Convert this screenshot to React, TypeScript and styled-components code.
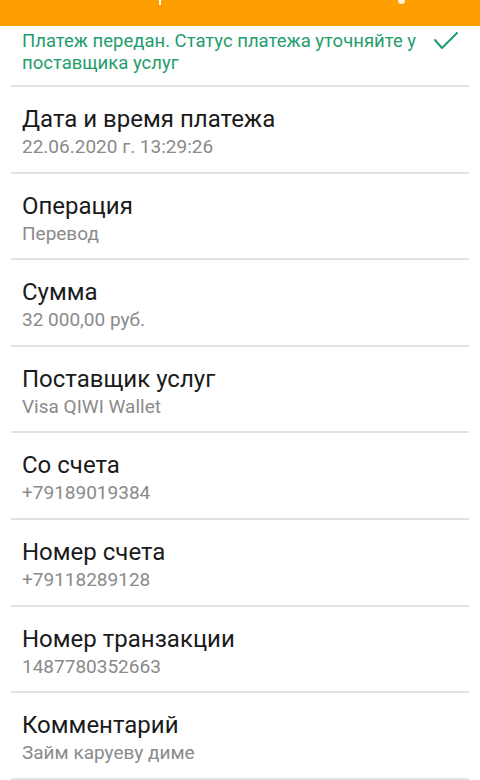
import React from "react";
import styled, { createGlobalStyle } from "styled-components";

const Global = createGlobalStyle`
  html, body { margin: 0; padding: 0; background: #ffffff; }
  body { font-family: Roboto, "Noto Sans", "Liberation Sans", sans-serif; }
  * { box-sizing: border-box; }
`;

const Page = styled.div`
  width: 480px;
  height: 780px;
  overflow: hidden;
  background: #ffffff;
  display: flex;
  flex-direction: column;
`;

const Header = styled.div`
  position: relative;
  height: 26px;
  flex: none;
  background: #ff9e00;
  overflow: hidden;
`;

const GlyphTail = styled.span<{ $left: number }>`
  position: absolute;
  top: 0;
  left: ${(p) => p.$left}px;
  width: 2px;
  height: 5px;
  background: #ffffff;
`;

const GlyphDot = styled.span<{ $left: number }>`
  position: absolute;
  top: -3px;
  left: ${(p) => p.$left}px;
  width: 7px;
  height: 7px;
  border-radius: 50%;
  background: #fff3d6;
`;

const Status = styled.div`
  margin: 0 11px;
  padding: 4px 11px 11px;
  border-bottom: 2px solid #e2e2e2;
  display: flex;
  align-items: flex-start;
  gap: 12px;
`;

const StatusText = styled.div`
  flex: 1;
  font-size: 18.5px;
  line-height: 22px;
  color: #1f9d6c;
`;

const CheckIcon = styled.svg`
  flex: none;
  width: 24px;
  height: 18px;
  margin-top: 2px;
  margin-right: 0;
`;

const Row = styled.div`
  margin: 0 11px;
  padding: 18px 11px 0;
  height: 86.6px;
  border-bottom: 2px solid #e2e2e2;
  display: flex;
  flex-direction: column;
  gap: 3px;
`;

const Title = styled.div`
  font-size: 24px;
  line-height: 28px;
  color: #1b1b1b;
`;

const Value = styled.div`
  font-size: 19px;
  line-height: 22px;
  color: #8a8a8a;
`;

const items: [string, string][] = [
  ["Дата и время платежа", "22.06.2020 г. 13:29:26"],
  ["Операция", "Перевод"],
  ["Сумма", "32 000,00 руб."],
  ["Поставщик услуг", "Visa QIWI Wallet"],
  ["Со счета", "+79189019384"],
  ["Номер счета", "+79118289128"],
  ["Номер транзакции", "1487780352663"],
  ["Комментарий", "Займ каруеву диме"],
];

export default function App() {
  return (
    <>
      <Global />
      <Page>
        <Header>
          <GlyphTail $left={159} />
          <GlyphDot $left={398} />
        </Header>
        <Status>
          <StatusText>
            Платеж передан. Статус платежа уточняйте у поставщика услуг
          </StatusText>
          <CheckIcon viewBox="0 0 24 18">
            <path
              d="M1 8 L8 16 L23 1"
              fill="none"
              stroke="#1f9d6c"
              strokeWidth="2"
              strokeLinecap="round"
              strokeLinejoin="round"
            />
          </CheckIcon>
        </Status>
        {items.map(([t, v]) => (
          <Row key={t}>
            <Title>{t}</Title>
            <Value>{v}</Value>
          </Row>
        ))}
      </Page>
    </>
  );
}
